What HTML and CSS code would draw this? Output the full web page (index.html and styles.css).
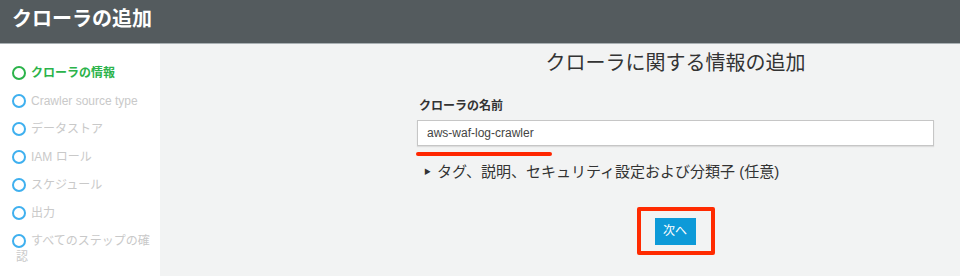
FILE: index.html
```html
<!DOCTYPE html>
<html lang="ja">
	<head>
		<meta charset="UTF-8">
		<link rel="stylesheet" href="styles.css">
		<title>クローラの追加</title>
	</head>
	<body>
		<div class="header">クローラの追加</div>
		<div class="layout">
			<div class="sidebar">
				<div class="step active"><span class="ring"></span>クローラの情報</div>
				<div class="step"><span class="ring"></span>Crawler source type</div>
				<div class="step"><span class="ring"></span>データストア</div>
				<div class="step"><span class="ring"></span>IAM ロール</div>
				<div class="step"><span class="ring"></span>スケジュール</div>
				<div class="step"><span class="ring"></span>出力</div>
				<div class="step"><span class="ring"></span>すべてのステップの確認</div>
			</div>
			<div class="main">
				<div class="panel">
					<h1 class="title">クローラに関する情報の追加</h1>
					<div class="field-label">クローラの名前</div>
					<input type="text" class="name" value="aws-waf-log-crawler">
					<div class="mark"></div>
					<div class="more"><span class="caret">&#9654;</span>タグ、説明、セキュリティ設定および分類子 (任意)</div>
					<div class="actions">
						<span class="highlight"><span class="btn">次へ</span></span>
					</div>
				</div>
			</div>
		</div>
	</body>
</html>
```

FILE: styles.css
```css
body {
	margin: 0;
	font-family: 'Liberation Sans', 'Noto Sans CJK JP', sans-serif;
	color: #333;
}
.header {
	height: 43px;
	line-height: 38px;
	padding-left: 12px;
	background: #545b5e;
	border-bottom: 1px solid #a9b0b3;
	color: #fff;
	font-size: 20px;
	font-weight: bold;
}
.layout {
	display: flex;
	height: 232px;
}
.sidebar {
	width: 160px;
	flex-shrink: 0;
	padding-top: 21px;
	background: #fff;
}
.step {
	padding: 0 10px 0 16px;
	margin-bottom: 12px;
	text-indent: -4px;
	font-size: 12px;
	line-height: 16px;
	color: #c9c9c9;
}
.step.active {
	color: #2bb34a;
	font-weight: bold;
}
.ring {
	display: inline-block;
	width: 10px;
	height: 10px;
	margin-right: 5px;
	border: 2px solid #3fb0ef;
	border-radius: 50%;
	vertical-align: -3px;
	text-indent: 0;
}
.step.active .ring {
	border-color: #2bb34a;
}
.main {
	flex: 1;
	padding-left: 257px;
	background: #f2f3f3;
}
.panel {
	width: 517px;
}
.title {
	margin: 7px 0 0;
	font-size: 20px;
	font-weight: normal;
	line-height: 24px;
	text-align: center;
	color: #333;
}
.field-label {
	margin-top: 23px;
	padding-left: 2px;
	font-size: 12px;
	font-weight: bold;
	line-height: 16px;
}
.name {
	display: block;
	box-sizing: border-box;
	width: 100%;
	height: 26px;
	margin-top: 6px;
	padding: 0 9px;
	border: 1px solid #c6c6c6;
	box-shadow: 0 1px 1px #ddd;
	background: #fff;
	font-family: 'Liberation Sans', sans-serif;
	font-size: 12px;
	color: #444;
}
.mark {
	width: 136px;
	height: 4px;
	margin: 6px 0 0 -1px;
	border-radius: 2px;
	background: #ff2600;
}
.more {
	margin-top: 6px;
	padding-left: 7px;
	font-size: 15px;
	line-height: 20px;
}
.caret {
	display: inline-block;
	margin-right: 6px;
	font-size: 7px;
	vertical-align: 3px;
}
.actions {
	margin-top: 25px;
	text-align: center;
}
.highlight {
	display: inline-block;
	padding: 7px 15px 6px 14px;
	border: 4px solid #ff2a00;
	border-radius: 2px;
}
.btn {
	display: block;
	width: 41px;
	height: 27px;
	line-height: 27px;
	background: #0d9ad8;
	color: #fff;
	font-size: 12px;
	text-align: center;
}
```
